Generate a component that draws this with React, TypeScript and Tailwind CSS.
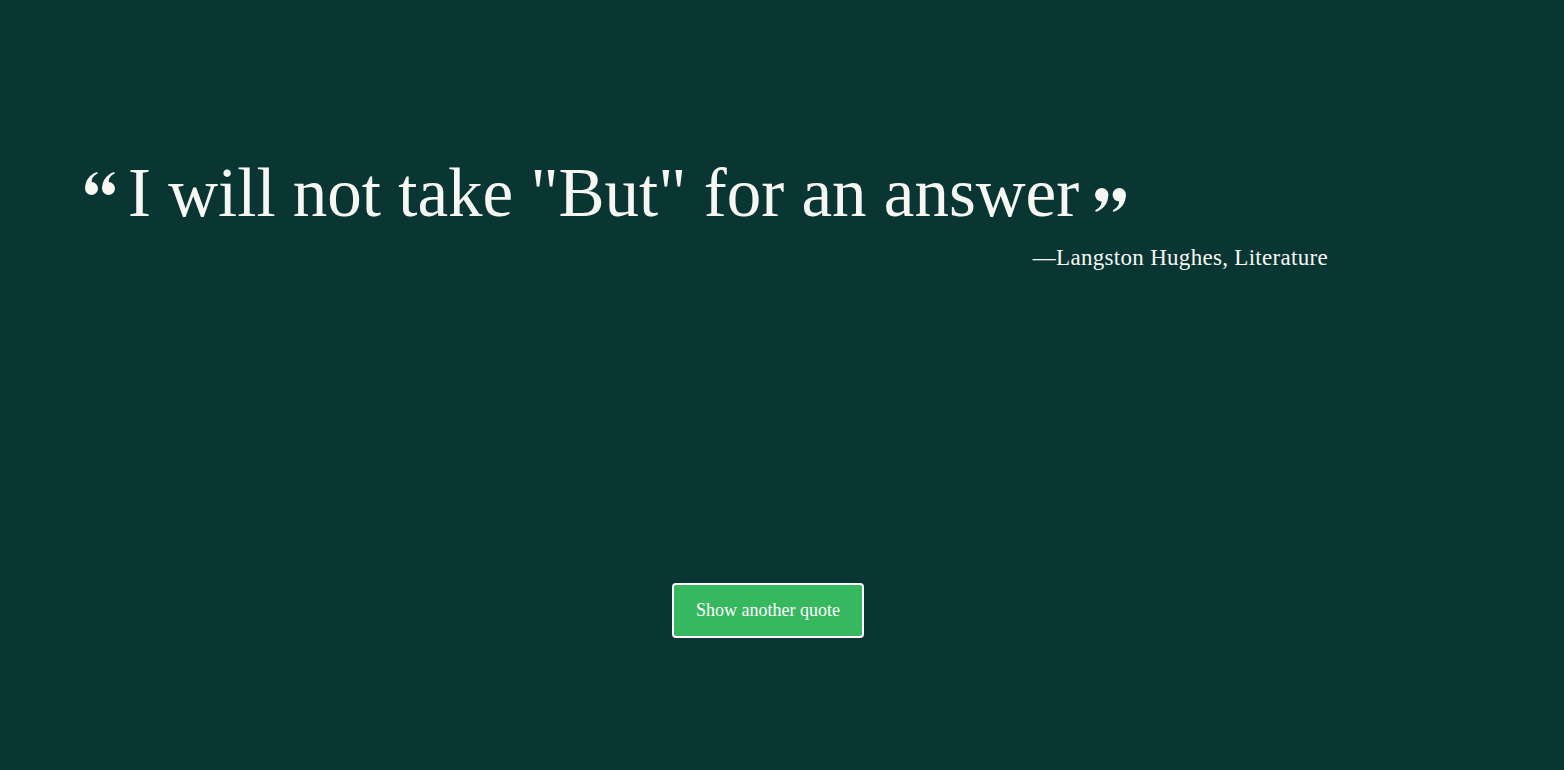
import React from 'react';

// bold curly quote mark drawn as an icon (two blobs with tails)
function QuoteMark({ flip, className }: { flip?: boolean; className?: string }) {
  const mark = (dx: number) => (
    <g transform={`translate(${dx} 0)`}>
      <circle cx="6.5" cy="16.5" r="6.5" />
      <path d="M0.3 16 C0.2 8.5 4.5 2.5 12.2 0 L12.8 1.6 C8.2 3.8 6.4 7 6.8 10.2 Z" />
    </g>
  );
  return (
    <svg
      viewBox="0 0 30 23"
      className={className}
      fill="currentColor"
      style={flip ? { transform: 'rotate(180deg)' } : undefined}
    >
      {mark(0)}
      {mark(17)}
    </svg>
  );
}

export default function App() {
  return (
    <div
      className="w-full h-[770px] bg-[#093632] text-[#f7f7f2] flex flex-col"
      style={{ fontFamily: '"Liberation Serif", "DejaVu Serif", serif' }}
    >
      <div className="pt-[159px] pl-[82px] w-[1328px]">
        <div className="flex items-start h-[68px]">
          <QuoteMark className="w-[30px] h-[23px] shrink-0 ml-[3px] mt-[13px] mr-[13px]" />
          <h1 className="text-[69px] leading-[68px] font-normal">I will not take "But" for an answer</h1>
          <QuoteMark flip className="w-[31px] h-[24px] shrink-0 mt-[29px] ml-[16px]" />
        </div>
        <p className="text-right text-[23px] tracking-[0.3px] mt-[14px]">—Langston Hughes, Literature</p>
      </div>
      <div className="flex justify-center pr-[28px] mt-[307px]">
        <button className="w-[192px] h-[55px] bg-[#37b760] border-2 border-white rounded-[4px] text-white text-[18px]">
          Show another quote
        </button>
      </div>
    </div>
  );
}
